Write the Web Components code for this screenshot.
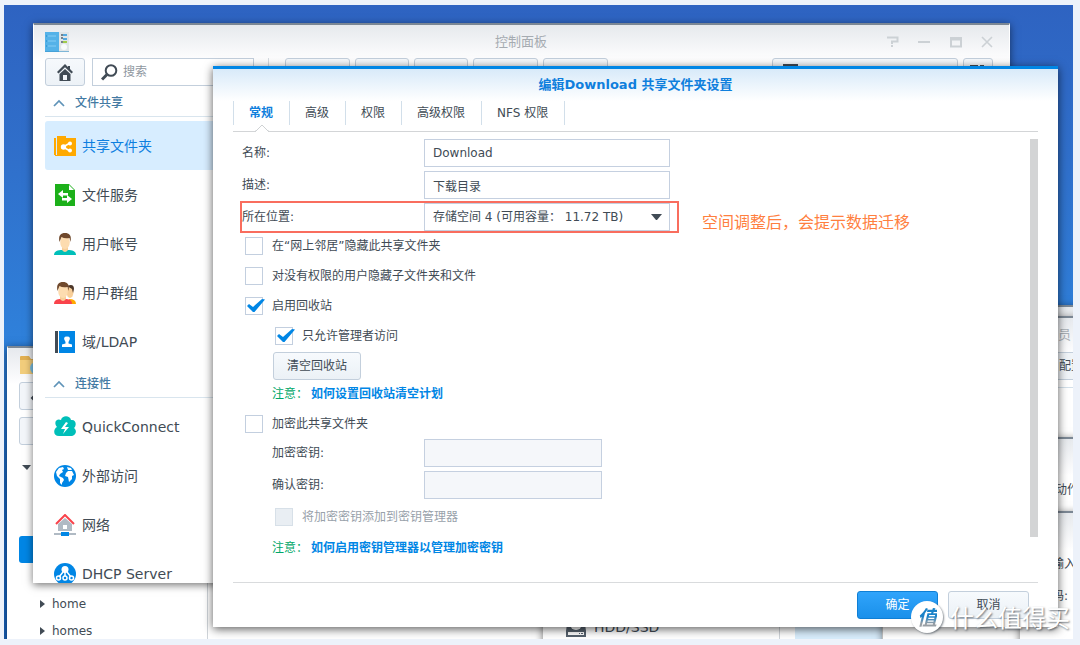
<!DOCTYPE html>
<html lang="zh-CN">
<head>
<meta charset="utf-8">
<title>控制面板</title>
<style>
  html, body { margin: 0; height: 100%; }
  body {
    box-sizing: border-box; min-height: 100vh; padding: 5px 7px 6px 4px; display: flex;
    background: #edf2fa; color: #414b55; overflow: hidden;
    font: 12px/18px "DejaVu Sans", "Noto Sans CJK SC", sans-serif;
  }
</style>
</head>
<body>
<desk-top></desk-top>

<template id="t-desktop">
  <style>
    :host { display: block; flex: 1; position: relative; overflow: hidden;
      background: linear-gradient(180deg, #2e63c1 0, #3070cb 25%, #2f80da 52%, #1b66bf 75%, #1763be 100%); }
    app-window, share-dialog, note-callout, site-mark { position: absolute; }
    .files { left: 3px; top: 341px; width: 536px; height: 320px; }
    .storage { left: 539px; top: 420px; width: 340px; height: 240px; }
    .blank { left: 879px; top: 420px; width: 137px; height: 240px; }
    .w1 { left: 980px; right: -60px; top: 300px; height: 60px; }
    .w2 { left: 980px; right: -60px; top: 311px; height: 130px; }
    .w3 { left: 980px; right: -60px; top: 432px; height: 90px; }
    .w4 { left: 1016px; right: -60px; top: 506px; height: 160px; }
    .panel { left: 29px; right: 63px; top: 18px; bottom: 56px; }
    share-dialog { left: 209px; right: 15px; top: 61px; bottom: 12px; }
    note-callout { left: 236px; top: 196px; }
    site-mark { right: 3px; bottom: 5px; }
  </style>
  <app-window class="files"><file-browser></file-browser></app-window>
  <app-window class="storage"><storage-list></storage-list></app-window>
  <app-window class="blank"></app-window>
  <app-window class="w1"></app-window>
  <app-window class="w2"><side-pane kind="users"></side-pane></app-window>
  <app-window class="w3"><side-pane kind="action"></side-pane></app-window>
  <app-window class="w4"><side-pane kind="input"></side-pane></app-window>
  <app-window class="panel"><control-panel></control-panel></app-window>
  <share-dialog></share-dialog>
  <note-callout>空间调整后，会提示数据迁移</note-callout>
  <site-mark></site-mark>
</template>

<template id="t-window">
  <style>
    :host { display: flex; flex-direction: column; box-sizing: border-box; overflow: visible;
      border-top: 2px solid #7b8794; border-right: 1px solid #fff; border-left: 1px solid #fff;
      background: linear-gradient(#e6e9ed 0, #fdfdfe 34px, #fff 36px) padding-box; box-shadow: 0 2px 8px rgba(0,0,0,.55); }
    .clip { flex: 1; min-height: 0; overflow: hidden; display: flex; flex-direction: column; }
    ::slotted(*) { flex: 1; min-height: 0; }
  </style>
  <div class="clip"><slot></slot></div>
</template>

<template id="t-files">
  <style>
    :host { display: flex; flex-direction: column; width: 188px; border-right: 1px solid #cfd4d9; padding-left: 11px; }
    header { height: 34px; display: flex; align-items: center; }
    .bar { height: 28px; margin-bottom: 7px; border: 1px solid #c3cfdc; border-radius: 3px; background: #f3f6fa; box-sizing: border-box; padding: 6px 0 0 10px; display: block; text-align: left; width: 60px; }
    ul { list-style: none; margin: 0; padding: 0; }
    li { height: 27px; display: flex; align-items: center; gap: 7px; padding-left: 21px; box-sizing: border-box; border-radius: 3px; }
    li.root { padding-left: 3px; height: 30px; }
    li.on { background: #0086e5; }
  </style>
  <header><svg width="26" height="20" viewBox="0 0 26 20"><path d="M1 2q0-1 1-1h8l2 3h12v15H1z" fill="#e2b052"/><path d="M1 5h24v14H1z" fill="#f2cd7c"/><circle cx="17" cy="13" r="6" fill="#7cc4ea"/></svg></header>
  <button class="bar" aria-label="后退"><svg width="8" height="12" viewBox="0 0 8 12"><path d="M6 2 2 6l4 4" fill="none" stroke="#3c4650" stroke-width="2"/></svg></button>
  <button class="bar" aria-label="上传"></button>
  <ul>
    <li class="root"><svg width="9" height="5"><path d="M0 0h9L5 5z" fill="#414b55"/></svg></li>
    <li></li><li></li><li class="on"></li><li></li>
    <li><svg width="5" height="8"><path d="M0 0v8l5-4z" fill="#414b55"/></svg>home</li>
    <li><svg width="5" height="8"><path d="M0 0v8l5-4z" fill="#414b55"/></svg>homes</li>
  </ul>
</template>

<template id="t-storage">
  <style>
    :host { display: flex; }
    .nav { flex: 0 0 235px; border-right: 1px solid #cfd4d9; display: flex; align-items: flex-end; }
    .row { display: flex; align-items: center; gap: 8px; padding: 0 0 28px 22px; height: 20px; font-size: 14px; }
    .pick { flex: 1; margin-left: 15px; background: #d8edfc; }
  </style>
  <div class="nav"><div class="row"><svg width="20" height="20" viewBox="0 0 20 20"><path d="M2 0h16l2 14v6H0v-6z" fill="#56616d"/><circle cx="10" cy="7" r="6" fill="#fff"/><path d="M2 15h16v3H2z" fill="#fff"/><path d="M13 16h1v1h-1zM15 16h2v1h-2z" fill="#56616d"/></svg><span>HDD/SSD</span></div></div>
  <div class="pick"></div>
</template>

<template id="t-side">
  <style>
    :host { display: block; }
    div { box-sizing: border-box; white-space: nowrap; }
    .users, .action, .input { display: none; }
    :host([kind=users]) .users, :host([kind=action]) .action, :host([kind=input]) .input { display: block; }
    .title { padding: 8px 0 0 73px; height: 34px; font-size: 13px; color: #a9b0b7; }
    .tool { padding: 4px 0 0 73px; height: 28px; border: 1px solid #c3cfdc; background: #f0f4f8; margin-bottom: 7px; }
    .rule { border-top: 1px solid #d3e0ea; }
    .action { padding: 42px 0 0 70px; }
    .input { padding: 41px 0 0 31px; line-height: 20px; }
    .input p { margin: 0 0 12px; }
  </style>
  <div class="users"><div class="title">员</div><div class="tool">配置</div><div class="rule"></div></div>
  <div class="action">动作</div>
  <div class="input"><p>输入</p><p>码:</p></div>
</template>

<template id="t-panel">
  <style>
    :host { display: flex; flex-direction: column; padding: 0 16px 0 11px; }
    header { height: 33px; flex: none; display: grid; grid-template-columns: 110px 1fr 106px; align-items: center; color: #a5abb1; font-size: 13px; }
    h1 { font: inherit; margin: 0; text-align: center; }
    .ctl { display: flex; justify-content: space-between; }
    .ctl button { border: 0; padding: 0; background: none; display: block; height: 12px; }
    .tools { display: flex; gap: 5px; flex: none; height: 28px; }
    .b { box-sizing: border-box; border: 1px solid #c3cfdc; border-radius: 3px; background: linear-gradient(#f6f9fc, #edf2f7); height: 28px; padding: 0; display: flex; align-items: center; justify-content: center; width: 54px; }
    .home { width: 40px; } .wide { width: 65px; } .mini { width: 30px; align-items: flex-start; padding-top: 5px; }
    .search { box-sizing: border-box; border: 1px solid #c3cfdc; width: 162px; background: #fff; display: flex; align-items: center; gap: 5px; padding-left: 8px; margin-left: 2px; }
    input { border: 0; padding: 0; outline: 0; width: 110px; font: inherit; background: none; color: inherit; }
    input::placeholder { color: #8f979f; opacity: 1; }
    .sep { width: 1px; background: #d5dbe1; margin: 0 11px 0 9px; }
    .filter { margin-left: auto; width: 186px; align-items: flex-start; padding-top: 5px; }
    nav { flex: 1; min-height: 0; overflow: hidden; width: 200px; }
  </style>
  <header>
    <svg width="24" height="20" viewBox="0 0 24 20"><path d="M12 0h12v20H12z" fill="#dfe5e8"/><path d="M0 0h14v20H0z" fill="#54b2e8"/><path d="M0 19h24v1H0z" fill="#3d96cc" opacity=".6"/><path d="M3 4h8M3 9h8M3 14h8" stroke="#85cdf4"/><path d="M1 4h1M1 9h1M1 14h1" stroke="#2387c4"/><path d="M16 3h2M16 6h2M16 10h2" stroke="#53606c" stroke-width="1.4"/><path d="M18 3h4M18 7h4" stroke="#55a9df" stroke-width="2"/><path d="M18 10h4" stroke="#a1cc4a" stroke-width="2"/><circle cx="19" cy="15" r="3" fill="#f8fafb"/></svg>
    <h1>控制面板</h1>
    <div class="ctl">
      <button aria-label="帮助"><svg width="12" height="12" viewBox="0 0 12 12"><path d="M0 1.500h10.500v4H5V8M5 9v2" fill="none" stroke="#ccd1d5" stroke-width="2"/></svg></button>
      <button aria-label="最小化"><svg width="12" height="12"><path d="M0 6h12" stroke="#ccd1d5" stroke-width="2"/></svg></button>
      <button aria-label="最大化"><svg width="12" height="12"><path d="M1 2h10v8.500H1zM1 3.500h10" fill="none" stroke="#ccd1d5" stroke-width="2"/></svg></button>
      <button aria-label="关闭"><svg width="12" height="12"><path d="m1 1 10 10M11 1 1 11" stroke="#ccd1d5" stroke-width="1.600"/></svg></button>
    </div>
  </header>
  <div class="tools">
    <button class="b home" aria-label="主页"><svg width="16" height="17" viewBox="0 0 16 17"><path d="M8 0 0 8l1.500 1.500L8 3.300l6.500 6.200L16 8l-3-3V2h-2v1z" fill="#414b55"/><path d="M2.500 10 8 5l5.500 5v7h-11z" fill="#414b55"/><path d="M6 11h4v5H6z" fill="#f3f6fa"/></svg></button>
    <label class="search"><svg width="17" height="17" viewBox="0 0 17 17"><circle cx="10" cy="6.500" r="5.300" fill="none" stroke="#414b55" stroke-width="2"/><path d="m6 10.500-5 5" stroke="#414b55" stroke-width="3"/></svg><input type="search" aria-label="搜索" placeholder="搜索"></label>
    <span class="sep"></span>
    <button class="b wide" aria-label="新增"></button><button class="b" aria-label="编辑"></button><button class="b" aria-label="删除"></button><button class="b wide" aria-label="加密"></button><button class="b wide" aria-label="操作"></button>
    <button class="b filter" aria-label="筛选"><svg width="165" height="10"><path d="M0 0h15v4H0z" fill="#414b55"/></svg></button>
    <button class="b mini" aria-label="排序"><svg width="16" height="10"><path d="M0 1h8v4H0zM10 1h4v4h-4z" fill="#414b55"/></svg></button>
  </div>
  <nav>
    <nav-section label="文件共享">
      <nav-item current label="共享文件夹"><svg width="22" height="22" viewBox="0 0 22 22"><path d="M0 3h2v17h-2z" fill="#ffa900"/><path d="M3 1h9v2h10v18H1v-1h2z" fill="#ffa900"/><path d="m9 12 7-4M9 12l7 4" stroke="#fff" stroke-width="1.500"/><circle cx="9.500" cy="12" r="2.700" fill="#fff"/><circle cx="16" cy="8.500" r="2" fill="#fff"/><circle cx="16" cy="15.500" r="2" fill="#fff"/></svg></nav-item>
      <nav-item label="文件服务"><svg width="22" height="22" viewBox="0 0 22 22"><path d="M1 0h14l6 6v16H1z" fill="#1cb01a"/><path d="M15 1v5h5z" fill="#fff"/><path d="M4 10l5-4v3h5v2.500H9V14zM18 15l-5-4v3H8v2.500h5V19z" fill="#fff"/></svg></nav-item>
      <nav-item label="用户帐号"><svg width="22" height="22" viewBox="0 0 22 22"><path d="M0 22c0-4 4-5 8-5h6c4 0 8 1 8 5z" fill="#00bfb9"/><path d="M8 13h6v4q-3 4-6 0z" fill="#f8cf9a"/><ellipse cx="11" cy="9" rx="4.800" ry="7" fill="#fddcb0"/><path d="M5.500 9C4 2 7 0 11 0s7 2 5.500 9l-1-4q-5 1-8-1z" fill="#70492c"/></svg></nav-item>
      <nav-item label="用户群组"><svg width="22" height="22" viewBox="0 0 22 22"><path d="M15 17q7 0 7 5h-6z" fill="#ffa900"/><ellipse cx="16" cy="10" rx="3.500" ry="6" fill="#f8cf9a"/><path d="M13 4q7-3 7 3l-1 4-1-4z" fill="#4d3729"/><path d="M0 22c0-4 3-5 7-5h4c4 0 7 1 7 5z" fill="#f9434b"/><path d="M6 13h6v4q-3 4-6 0z" fill="#f8cf9a"/><ellipse cx="9" cy="9" rx="4.800" ry="7" fill="#fddcb0"/><path d="M3.500 9C2 2 5 0 9 0s7 2 5.500 9l-1-4q-5 1-8-1z" fill="#70492c"/></svg></nav-item>
      <nav-item label="域/LDAP"><svg width="22" height="22" viewBox="0 0 22 22"><path d="M1 0h3v22H1z" fill="#414b55"/><path d="M5 0h16v22H5z" fill="#0086e5"/><path d="M8 16v-2.500l3.500-1V11Q8 5.500 13 5.500T14.500 11v1.500l3.500 1V16z" fill="#fff"/></svg></nav-item>
    </nav-section>
    <nav-section label="连接性">
      <nav-item label="QuickConnect"><svg width="22" height="22" viewBox="0 0 22 22"><path d="M5 20C-1 20-1 13 3 11-1 6 3 2 7 4c1-5 9-5 10 0 5-1 6 5 3 8 4 3 1 8-3 8z" fill="#00bfb9"/><path d="m12 6-5 7h4l-2 5 6-7h-4l3-4z" fill="#fff"/></svg></nav-item>
      <nav-item label="外部访问"><svg width="22" height="22" viewBox="0 0 22 22"><circle cx="11" cy="11" r="11" fill="#0086e5"/><path d="M2 7 5 3l4-1 1 2-2 1 1 2-3 2-1 2 4 2 1 2-2 3v2l-2-2v-4l-3-3zM12 8l2-2 4 0 2 4-2 1 0 3-3 3-1-5-3-1zM13 2l4 1 1 2-4 0z" fill="#fff"/></svg></nav-item>
      <nav-item label="网络"><svg width="22" height="22" viewBox="0 0 22 22"><path d="m4 10 7-6 7 6v7H4z" fill="#b0bac4"/><path d="M9 11h4v4H9z" fill="#fff"/><path d="m2 10 9-9 9 9" fill="none" stroke="#f9434b" stroke-width="2"/><path d="M0 20h22" stroke="#b0bac4" stroke-width="2"/><path d="M7 18h8v4H7z" fill="#0086e5"/></svg></nav-item>
      <nav-item label="DHCP Server"><svg width="22" height="22" viewBox="0 0 22 22"><circle cx="11" cy="11" r="11" fill="#0086e5"/><g fill="none" stroke="#fff" stroke-width="1.500"><path d="M11 9v4M9 9l-4 5M13 9l4 5"/><circle cx="4.500" cy="15" r="2"/><circle cx="11" cy="15" r="2"/><circle cx="17.500" cy="15" r="2"/></g><circle cx="11" cy="6.500" r="3.500" fill="#fff"/></svg></nav-item>
    </nav-section>
  </nav>
</template>

<template id="t-section">
  <style>
    :host { display: block; margin-bottom: 1px; }
    h2 { margin: 0 0 4px; height: 31px; box-sizing: border-box; border-bottom: 1px solid #d9e5ee; display: flex; align-items: center; gap: 10px; padding: 4px 0 0 8px; font: 500 12px/18px "DejaVu Sans", "Noto Sans CJK SC", sans-serif; color: #437aa3; }
  </style>
  <h2><svg width="12" height="8" viewBox="0 0 12 8"><path d="m1 7 5-5 5 5" fill="none" stroke="#5f93b8" stroke-width="1.700"/></svg><span></span></h2>
  <slot></slot>
</template>

<template id="t-item">
  <style>
    :host { display: block; }
    a { height: 49px; display: flex; align-items: center; gap: 6px; padding-left: 9px; color: #414b55; text-decoration: none; font-size: 14px; border-radius: 3px; }
    :host([current]) a { background: #d7edff; color: #0d7fdf; }
  </style>
  <a href="#"><slot></slot><span></span></a>
</template>

<template id="t-dialog">
  <style>
    :host { display: flex; flex-direction: column; box-sizing: border-box; border-top: 3px solid #0086e5; padding: 0 20px; background: linear-gradient(#d8eaf9 0, #fff 32px); box-shadow: 0 2px 9px rgba(0,0,0,.65); }
    h1 { margin: 0; height: 32px; line-height: 32px; text-align: center; font-size: 13px; color: #0f7fdd; flex: none; }
    .tabs { display: flex; height: 30px; flex: none; border-bottom: 1px solid #d3d5d7; }
    .tabs button { position: relative; height: 24px; border: 0; border-left: 1px solid #d2dfea; background: none; padding: 0 16px 0 15px; font: inherit; color: inherit; }
    .tabs button:last-child { border-right: 1px solid #d2dfea; }
    .tabs button.on { color: #0f7fdd; font-weight: bold; }
    .tabs svg { position: absolute; left: 21px; top: 23px; }
    .body { flex: 1; min-height: 0; display: flex; padding: 7px 0 45px 9px; border-bottom: 1px solid #d9dbdd; }
    form { flex: 1; }
    .thumb { width: 8px; background: #d3d4d5; }
    .fields { display: grid; gap: 4px; }
    .sub { padding-left: 30px; display: grid; }
    .sub.key { gap: 4px; }
    .key check-option { height: 28px; }
    .gap { margin-top: 4px; }
    .empty { box-sizing: border-box; width: 90px; height: 30px; padding: 1px; display: flex; }
    .empty ui-button { flex: 1; }
    p { margin: 0; height: 24px; line-height: 26px; color: #00a768; display: flex; gap: 3px; }
    a { color: #0086e5; text-decoration: none; font-weight: bold; }
    footer { flex: none; height: 44px; display: flex; align-items: center; justify-content: flex-end; gap: 10px; padding-right: 9px; }
    footer ui-button { width: 81px; }
  </style>
  <h1>编辑Download 共享文件夹设置</h1>
  <div class="tabs">
    <button class="on">常规<svg width="14" height="8" viewBox="0 0 14 8"><path d="m1 7 6-6 6 6v1H1z" fill="#fff"/><path d="m0 7h1l6-6 6 6h1" fill="none" stroke="#cfd2d4"/></svg></button><button>高级</button><button>权限</button><button>高级权限</button><button>NFS 权限</button>
  </div>
  <div class="body">
    <form>
      <div class="fields">
        <form-field label="名称:" value="Download"></form-field>
        <form-field label="描述:" value="下载目录"></form-field>
        <form-field label="所在位置:" value="存储空间 4 (可用容量： 11.72 TB)" kind="select"></form-field>
      </div>
      <check-option label="在“网上邻居”隐藏此共享文件夹"></check-option>
      <check-option label="对没有权限的用户隐藏子文件夹和文件"></check-option>
      <check-option checked label="启用回收站"></check-option>
      <div class="sub">
        <check-option checked label="只允许管理者访问"></check-option>
        <div class="empty"><ui-button label="清空回收站"></ui-button></div>
        <p><span>注意：</span><a href="#">如何设置回收站清空计划</a></p>
      </div>
      <check-option class="gap" label="加密此共享文件夹"></check-option>
      <div class="sub key">
        <form-field label="加密密钥:" kind="password" disabled></form-field>
        <form-field label="确认密钥:" kind="password" disabled></form-field>
        <check-option disabled label="将加密密钥添加到密钥管理器"></check-option>
        <p><span>注意：</span><a href="#">如何启用密钥管理器以管理加密密钥</a></p>
      </div>
    </form>
    <div class="thumb"></div>
  </div>
  <footer><ui-button primary label="确定"></ui-button><ui-button label="取消"></ui-button></footer>
</template>

<template id="t-field">
  <style>
    :host { display: flex; align-items: center; height: 28px; }
    label { width: 182px; flex: none; line-height: 20px; }
    :host([disabled]) label { width: 152px; }
    .box { position: relative; display: flex; width: 246px; }
    :host([disabled]) .box { width: 178px; }
    input, select { box-sizing: border-box; width: 100%; height: 28px; margin: 0; padding: 0 8px; border: 1px solid #c5d0e0; border-radius: 0; background: #fff; color: #414b55; font: inherit; appearance: none; }
    input:disabled { background: #f5f7fa; }
    svg { position: absolute; right: 8px; top: 11px; pointer-events: none; display: none; }
    :host([kind=select]) svg { display: block; }
  </style>
  <label for="c"></label>
  <span class="box"><svg width="11" height="6"><path d="M0 0h11L6 6H5z" fill="#414b55"/></svg></span>
</template>

<template id="t-check">
  <style>
    :host { display: flex; align-items: center; height: 30px; }
    label { display: flex; align-items: center; gap: 9px; padding-left: 3px; }
    .box { position: relative; display: flex; }
    input { appearance: none; box-sizing: border-box; width: 18px; height: 18px; margin: 0; border: 1px solid #c3cfdf; background: #fff; }
    :host([disabled]) { color: #98a1aa; }
    input:disabled { background: #e9eef3; border-color: #d7e0e8; }
    svg { position: absolute; left: 2px; top: 2px; display: none; }
    :host([checked]) svg { display: block; }
  </style>
  <label><span class="box"><input type="checkbox"><svg width="18" height="14" viewBox="0 0 18 14"><path d="m0 7 2-2 4 3L15 0l3 .500L7.500 13 6 13z" fill="#0086e5"/></svg></span><span class="text"></span></label>
</template>

<template id="t-button">
  <style>
    :host { display: flex; }
    button { flex: 1; height: 28px; padding: 0; border: 1px solid #c3cfdc; border-radius: 3px; background: linear-gradient(#f7fafd, #ebf1f6); color: #414b55; font: inherit; }
    :host([primary]) button { background: linear-gradient(#30a4fb, #1a90ea); border-color: #0f7fd5; color: #fff; }
  </style>
  <button type="button"></button>
</template>

<template id="t-callout">
  <style>
    :host { display: flex; align-items: center; gap: 23px; color: #ff7f3f; font-size: 16px; line-height: 24px; white-space: nowrap; pointer-events: none; }
    .frame { box-sizing: border-box; width: 439px; height: 32px; border: 2px solid #f96d5e; }
    span { padding-top: 14px; }
    :host { align-items: flex-start; }
    span { padding-top: 10px; }
  </style>
  <div class="frame"></div><span><slot></slot></span>
</template>

<template id="t-mark">
  <style>
    :host { display: flex; align-items: center; gap: 7px; color: #fff; pointer-events: none; font: 24px/34px "Noto Sans CJK SC", sans-serif; text-shadow: 1px 1px 2px rgba(60,70,80,.75); }
    b { width: 32px; height: 32px; border-radius: 50%; background: #fff; box-shadow: 1px 1px 2px rgba(60,70,80,.6); text-align: center; font: italic bold 20px/31px "Noto Sans CJK SC", sans-serif; text-shadow: none; color: transparent; }
    b span { background: linear-gradient(#1a82c8 50%, #999fa5 75%); background-clip: text; }
  </style>
  <b><span>值</span></b><span>什么值得买</span>
</template>

<script>
  class Part extends HTMLElement {
    connectedCallback() {
      if (this.shadowRoot) return;
      const root = this.attachShadow({ mode: 'open' });
      root.append(document.getElementById(this.constructor.template).content.cloneNode(true));
      this.fill(root);
    }
    fill() {}
  }
  const plain = (name, template) => customElements.define(name, class extends Part { static template = template; });

  class TextPart extends Part {
    static target = 'span';
    fill(root) { root.querySelector(this.constructor.target).textContent = this.getAttribute('label'); }
  }

  class FormField extends Part {
    static template = 't-field';
    fill(root) {
      const kind = this.getAttribute('kind') || 'text';
      const value = this.getAttribute('value') || '';
      root.querySelector('label').textContent = this.getAttribute('label');
      const control = document.createElement(kind === 'select' ? 'select' : 'input');
      control.id = 'c';
      if (kind === 'select') control.add(new Option(value));
      else { control.type = kind; control.value = value; }
      control.disabled = this.hasAttribute('disabled');
      root.querySelector('.box').prepend(control);
    }
  }

  class CheckOption extends TextPart {
    static template = 't-check';
    static target = '.text';
    fill(root) {
      super.fill(root);
      const box = root.querySelector('input');
      box.checked = this.hasAttribute('checked');
      box.disabled = this.hasAttribute('disabled');
      box.addEventListener('change', () => this.toggleAttribute('checked', box.checked));
    }
  }

  plain('app-window', 't-window');
  plain('file-browser', 't-files');
  plain('storage-list', 't-storage');
  plain('side-pane', 't-side');
  plain('control-panel', 't-panel');
  plain('share-dialog', 't-dialog');
  plain('note-callout', 't-callout');
  plain('site-mark', 't-mark');
  customElements.define('nav-section', class extends TextPart { static template = 't-section'; static target = 'h2 span'; });
  customElements.define('nav-item', class extends TextPart { static template = 't-item'; });
  customElements.define('ui-button', class extends TextPart { static template = 't-button'; static target = 'button'; });
  customElements.define('form-field', FormField);
  customElements.define('check-option', CheckOption);
  plain('desk-top', 't-desktop');
</script>
</body>
</html>
